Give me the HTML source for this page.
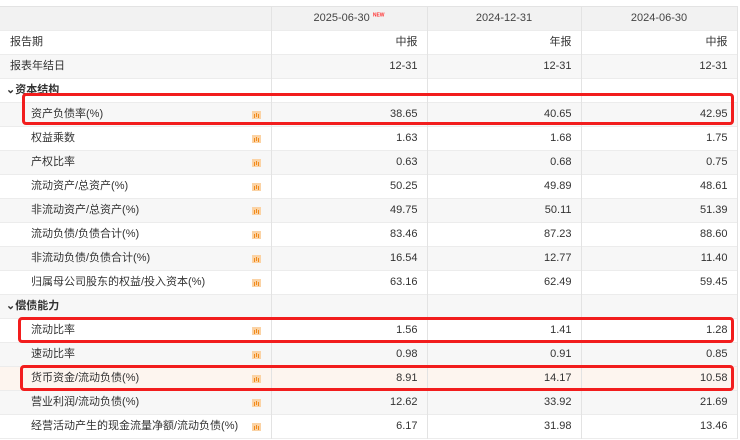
<!DOCTYPE html><html><head><meta charset="utf-8"><style>
body{margin:0;width:740px;height:440px;overflow:hidden;background:#fff;font-family:"Liberation Sans","Noto Sans CJK SC",sans-serif;font-size:11px;color:#333}
table{position:absolute;left:0;top:6px;border-collapse:collapse;table-layout:fixed;width:737px}
td{height:23px;line-height:23px;padding:0;border-right:1px solid #e3e3e3;white-space:nowrap;position:relative;overflow:visible}
tr{border-bottom:1px solid #ececec}
tr.h td{background:#f2f2f2;text-align:center;color:#444;border-top:1px solid #e3e3e3}
td.n{text-align:right;padding-right:9px}
td.l{padding-left:10px}
td.c{padding-left:31px}
tr.g td{background:#f7f7f7}
tr.o td{background:#fdf5ef}
.s{font-weight:bold;padding-left:6px}
.ic{position:absolute;left:252px;top:8px;width:9px;height:8px;background:#fbd3a5;}
.ic:after{content:"";position:absolute;left:2px;bottom:1px;width:1px;height:4px;background:#f08a1c;box-shadow:2px -1px 0 #f08a1c,4px 0 0 #f08a1c}
.box{position:absolute;border:3px solid #f21d1d;border-radius:4px}
sup{color:#f33;font-size:5px;font-weight:bold;line-height:0}
</style></head><body>
<table>
<colgroup><col style="width:271px"><col style="width:156px"><col style="width:154px"><col style="width:156px"></colgroup>
<tr class="h"><td></td><td>2025-06-30 <sup>NEW</sup></td><td>2024-12-31</td><td>2024-06-30</td></tr>
<tr><td class="l">报告期</td><td class="n">中报</td><td class="n">年报</td><td class="n">中报</td></tr>
<tr class="g"><td class="l">报表年结日</td><td class="n">12-31</td><td class="n">12-31</td><td class="n">12-31</td></tr>
<tr><td class="s">⌄资本结构</td><td></td><td></td><td></td></tr>
<tr class="g"><td class="c">资产负债率(%)<i class="ic"></i></td><td class="n">38.65</td><td class="n">40.65</td><td class="n">42.95</td></tr>
<tr><td class="c">权益乘数<i class="ic"></i></td><td class="n">1.63</td><td class="n">1.68</td><td class="n">1.75</td></tr>
<tr class="g"><td class="c">产权比率<i class="ic"></i></td><td class="n">0.63</td><td class="n">0.68</td><td class="n">0.75</td></tr>
<tr><td class="c">流动资产/总资产(%)<i class="ic"></i></td><td class="n">50.25</td><td class="n">49.89</td><td class="n">48.61</td></tr>
<tr class="g"><td class="c">非流动资产/总资产(%)<i class="ic"></i></td><td class="n">49.75</td><td class="n">50.11</td><td class="n">51.39</td></tr>
<tr><td class="c">流动负债/负债合计(%)<i class="ic"></i></td><td class="n">83.46</td><td class="n">87.23</td><td class="n">88.60</td></tr>
<tr class="g"><td class="c">非流动负债/负债合计(%)<i class="ic"></i></td><td class="n">16.54</td><td class="n">12.77</td><td class="n">11.40</td></tr>
<tr><td class="c">归属母公司股东的权益/投入资本(%)<i class="ic"></i></td><td class="n">63.16</td><td class="n">62.49</td><td class="n">59.45</td></tr>
<tr class="g"><td class="s">⌄偿债能力</td><td></td><td></td><td></td></tr>
<tr><td class="c">流动比率<i class="ic"></i></td><td class="n">1.56</td><td class="n">1.41</td><td class="n">1.28</td></tr>
<tr class="g"><td class="c">速动比率<i class="ic"></i></td><td class="n">0.98</td><td class="n">0.91</td><td class="n">0.85</td></tr>
<tr class="o"><td class="c">货币资金/流动负债(%)<i class="ic"></i></td><td class="n">8.91</td><td class="n">14.17</td><td class="n">10.58</td></tr>
<tr class="g"><td class="c">营业利润/流动负债(%)<i class="ic"></i></td><td class="n">12.62</td><td class="n">33.92</td><td class="n">21.69</td></tr>
<tr><td class="c">经营活动产生的现金流量净额/流动负债(%)<i class="ic"></i></td><td class="n">6.17</td><td class="n">31.98</td><td class="n">13.46</td></tr>
</table>
<div class="box" style="left:22px;top:93px;width:706px;height:26px"></div>
<div class="box" style="left:18px;top:317px;width:710px;height:20px"></div>
<div class="box" style="left:20px;top:365px;width:708px;height:20px"></div>
</body></html>
